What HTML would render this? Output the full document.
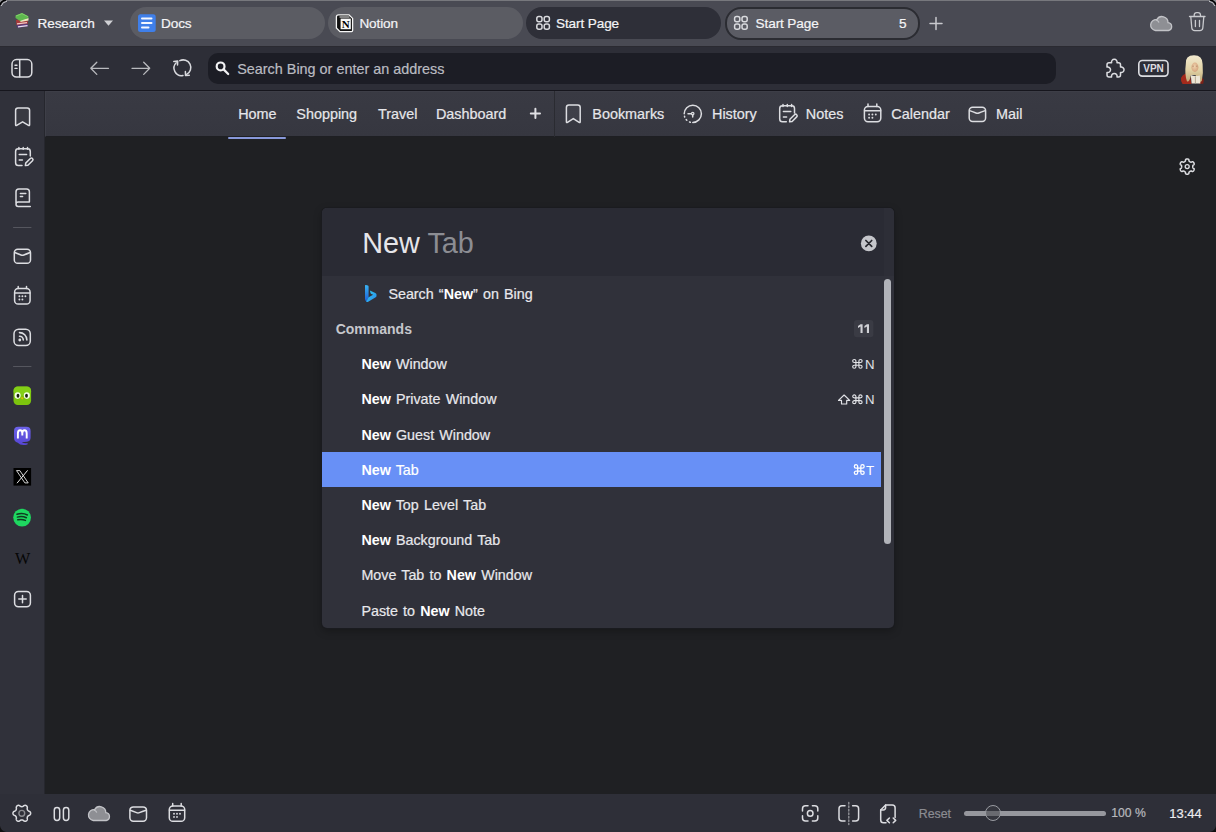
<!DOCTYPE html>
<html><head><meta charset="utf-8">
<style>
*{box-sizing:border-box;margin:0;padding:0}
html,body{width:1216px;height:832px;overflow:hidden;background:#1f2023;font-family:"Liberation Sans",sans-serif;}
.a{position:absolute}
.t{position:absolute;white-space:nowrap;line-height:1;-webkit-text-stroke:0.2px currentColor}
.t b{-webkit-text-stroke:0}
.nost{-webkit-text-stroke:0}
svg{position:absolute;overflow:visible}
#tabbar{left:0;top:0;width:1216px;height:46px;background:#494a53;border-top:1px solid #77787d}
#addr{left:0;top:46px;width:1216px;height:45px;background:#2d2e37;border-bottom:1px solid #16161d;border-top:1px solid #2a2a31}
#side{left:0;top:91px;width:45px;height:703px;background:#30313a;border-right:1px solid #26272e}
#bmbar{left:45px;top:91px;width:1171px;height:46px;background:linear-gradient(#393a43,#363740);border-bottom:1px solid #1e1f23;border-left:1px solid #3e3f48;border-top:1px solid #3d3e47}
#content{left:45px;top:137px;width:1171px;height:657px;background:#1f2023}
#status{left:0;top:794px;width:1216px;height:38px;background:#2e2f38}
.tab{position:absolute;top:7px;height:32px;border-radius:16px}
.tt{color:#f4f4f6;font-size:13.6px;letter-spacing:-0.12px}
.bm{color:#e6e6ea;font-size:14.4px}
.ic{fill:none;stroke:#dcdde1;stroke-width:1.5;stroke-linecap:round;stroke-linejoin:round}
#dlg{left:322px;top:208px;width:572px;height:420px;background:#30313a;border-radius:5px;overflow:hidden;box-shadow:0 0 0 1px #1a1b1f,0 3px 8px rgba(0,0,0,0.28)}
#dlghead{left:0;top:0;width:572px;height:68px;background:linear-gradient(90deg,#2a2b34 0,#2a2b34 562px,#2d2e37 562px)}
.it{color:#e8e8ec;font-size:14.3px;word-spacing:1.2px}
.it b{color:#fff}
</style></head><body>
<div id="tabbar" class="a"></div>
<div id="addr" class="a"></div>
<div id="side" class="a"></div>
<div id="bmbar" class="a"></div>
<div id="content" class="a"></div>
<div id="status" class="a"></div>

<!-- tabs -->
<div class="t tt" style="left:37.5px;top:16.9px">Research</div>
<div class="tab" style="left:130px;width:195px;background:#5b5c63"></div>
<div class="t tt" style="left:161px;top:16.9px">Docs</div>
<div class="tab" style="left:328px;width:195px;background:#5b5c63"></div>
<div class="t tt" style="left:359.4px;top:16.9px">Notion</div>
<div class="tab" style="left:526px;width:195px;background:#2e2f38"></div>
<div class="t tt" style="left:556px;top:16.9px">Start Page</div>
<div class="tab" style="left:724.5px;width:195px;top:6.5px;height:33px;background:#5b5c64;border:2px solid #2b2c32"></div>
<div class="t tt" style="left:755.6px;top:16.9px">Start Page</div>
<div class="t tt" style="left:899px;top:16.9px">5</div>


<!-- tab bar icons -->
<svg style="left:0;top:0" width="1216" height="46" viewBox="0 0 1216 46">
  <!-- books -->
  <path d="M16.5 24.5 L27.5 23 L28 26.5 L17.5 28 Z" fill="#5b3a78"/>
  <path d="M18 26.8 L27.5 25.6" stroke="#e8e0f0" stroke-width="1.3"/>
  <path d="M16 20 L27.5 18.5 L28 23.5 L16.5 25 Z" fill="#a83a3a"/>
  <path d="M17 23.8 L27 22.6" stroke="#f0c8c8" stroke-width="1.2"/>
  <path d="M20 19.5 L28.5 18 L28.5 20.5 L20.5 22 Z" fill="#ece8c0"/>
  <path d="M15.5 15.5 L22 13 L28.5 16.5 L28.5 18 L20 21 L15.5 18 Z" fill="#5fb84f"/>
  <path d="M16 16 L22 13.6 L28 16.6" stroke="#8ad870" stroke-width="0.8" fill="none"/>
  <!-- dropdown -->
  <path d="M104 20.6 L113 20.6 L108.5 25.8 Z" fill="#cfd0d4"/>
  <!-- docs -->
  <rect x="138" y="14.3" width="17.7" height="17.6" rx="2.5" fill="#3f7fe9"/>
  <path d="M142 18.6 H151.5 M142 23.1 H151.5 M142 27.6 H148.5" stroke="#f4f8ff" stroke-width="2" stroke-linecap="round"/>
  <!-- notion -->
  <path d="M338.5 14.8 H349 L352.6 18.4 V30.6 Q352.6 31.6 351.6 31.6 H340 L336.4 28 V16.8 Q336.4 14.8 338.5 14.8 Z" fill="#111" stroke="#f5f5f5" stroke-width="1.3"/>
  <rect x="340.6" y="18.6" width="10.2" height="10.6" fill="#fafafa"/>
  <path d="M339.5 17 H349.5" stroke="#f5f5f5" stroke-width="1"/>
  <text x="345.7" y="27.6" font-family="Liberation Serif" font-weight="bold" font-size="11" text-anchor="middle" fill="#000">N</text>
  <!-- start page icons -->
  <g fill="none" stroke="#d9dade" stroke-width="1.5">
    <rect x="536.8" y="16.6" width="5.2" height="5.2" rx="2"/>
    <rect x="544.2" y="16.6" width="5.2" height="5.2" rx="2"/>
    <rect x="536.8" y="24" width="5.2" height="5.2" rx="2"/>
    <rect x="544.2" y="24" width="5.2" height="5.2" rx="2"/>
    <rect x="734.6" y="16.6" width="5.2" height="5.2" rx="2"/>
    <rect x="742" y="16.6" width="5.2" height="5.2" rx="2"/>
    <rect x="734.6" y="24" width="5.2" height="5.2" rx="2"/>
    <rect x="742" y="24" width="5.2" height="5.2" rx="2"/>
  </g>
  <!-- plus -->
  <path d="M936 17.5 V29.5 M930 23.5 H942" stroke="#c9cace" stroke-width="1.5" stroke-linecap="round"/>
  <!-- cloud -->
  <path d="M1155.5 30.5 H1168.5 A4 4 0 0 0 1168 22.6 A6 6 0 0 0 1156.8 19.6 A5.4 5.4 0 0 0 1155.5 30.5 Z" fill="#8e8f94" stroke="#c2c3c7" stroke-width="1.3"/>
  <path d="M1156 20 A4.2 4.2 0 0 1 1159 22.5" fill="none" stroke="#c2c3c7" stroke-width="1.2"/>
  <!-- trash -->
  <g fill="none" stroke="#c9cace" stroke-width="1.3" stroke-linecap="round" stroke-linejoin="round">
    <path d="M1189.5 16.5 H1205"/>
    <path d="M1194.2 16.3 V15 A2.5 2.5 0 0 1 1196.7 12.6 H1198 A2.5 2.5 0 0 1 1200.5 15 V16.3"/>
    <path d="M1190.8 16.8 L1191.8 28 A3 3 0 0 0 1194.8 30.6 H1199.8 A3 3 0 0 0 1202.8 28 L1203.8 16.8"/>
    <path d="M1195.4 20.3 V26.5 M1199.5 20.3 V26.5"/>
  </g>
</svg>

<!-- address -->
<div class="a" style="left:207.5px;top:53px;width:848.5px;height:30.8px;border-radius:10px;background:#1c1d25"></div>
<div class="t" style="left:237.2px;top:61.6px;font-size:14.4px;color:#babbc1">Search Bing or enter an address</div>

<!-- bookmarks bar -->
<div class="t bm" style="left:238.2px;top:107.2px">Home</div>
<div class="t bm" style="left:296.3px;top:107.2px">Shopping</div>
<div class="t bm" style="left:378px;top:107.2px">Travel</div>
<div class="t bm" style="left:435.9px;top:107.2px">Dashboard</div>
<div class="a" style="left:228.3px;top:136.5px;width:58.2px;height:2px;border-radius:1px;background:#8898da"></div>
<div class="a" style="left:554px;top:91px;width:1px;height:46px;background:#2a2b31"></div>
<div class="t bm" style="left:592.3px;top:107.2px">Bookmarks</div>
<div class="t bm" style="left:712px;top:107.2px">History</div>
<div class="t bm" style="left:805.8px;top:107.2px">Notes</div>
<div class="t bm" style="left:891.3px;top:107.2px">Calendar</div>
<div class="t bm" style="left:996px;top:107.2px">Mail</div>

<!-- dialog -->
<div id="dlg" class="a">
  <div id="dlghead" class="a"></div>
</div>
<div class="t nost" style="left:362.3px;top:229.1px;font-size:28.8px;color:#e6e6ea">New <span style="color:#8c8d93">Tab</span></div>
<div class="t it" style="left:388.4px;top:286.9px">Search “<b>New</b>” on Bing</div>
<div class="t nost" style="left:335.7px;top:322px;font-size:14px;font-weight:bold;color:#c6c7cc">Commands</div>
<div class="a" style="left:322px;top:452px;width:559px;height:35px;background:#6890f6"></div>
<div class="t it" style="left:361.4px;top:357.2px"><b>New</b> Window</div>
<div class="t it" style="left:361.4px;top:392.4px"><b>New</b> Private Window</div>
<div class="t it" style="left:361.4px;top:427.6px"><b>New</b> Guest Window</div>
<div class="t it" style="left:361.4px;top:462.8px;color:#fff"><b>New</b> Tab</div>
<div class="t it" style="left:361.4px;top:498px"><b>New</b> Top Level Tab</div>
<div class="t it" style="left:361.4px;top:533.2px"><b>New</b> Background Tab</div>
<div class="t it" style="left:361.4px;top:568.4px">Move Tab to <b>New</b> Window</div>
<div class="t it" style="left:361.4px;top:603.6px">Paste to <b>New</b> Note</div>
<div class="a" style="left:884px;top:279px;width:7px;height:265px;border-radius:3.5px;background:#b1b3b9"></div>


<!-- address/bookmark/sidebar/status icons -->
<svg style="left:0;top:0" width="1216" height="832" viewBox="0 0 1216 832">
<defs>
  <linearGradient id="bingg" x1="0" y1="0" x2="1" y2="1"><stop offset="0" stop-color="#2aa4f4"/><stop offset="0.6" stop-color="#1b6fe0"/><stop offset="1" stop-color="#4fd6f2"/></linearGradient>
</defs>
<g class="ic">
  <!-- panel toggle -->
  <rect x="12" y="59.6" width="19.8" height="17.4" rx="4.5"/>
  <path d="M19.7 59.8 V76.8"/>
</g>
<path d="M15 65.2 H17 M15 68.4 H17" stroke="#e0e0e4" stroke-width="1.4" stroke-linecap="round"/>
<g fill="none" stroke="#b9babe" stroke-width="1.3" stroke-linecap="round" stroke-linejoin="round">
  <path d="M90.8 68.3 H108.5 M96.8 62.2 L90.8 68.3 L96.8 74.4"/>
  <path d="M132 68.3 H149.7 M143.7 62.2 L149.7 68.3 L143.7 74.4"/>
</g>
<g fill="none" stroke="#d8d9dd" stroke-width="1.5" stroke-linecap="round" stroke-linejoin="round">
  <path d="M176.2 62.8 A7.6 7.6 0 0 0 183 75.6"/>
  <path d="M179.8 60.7 A7.6 7.6 0 0 1 186.6 74.3"/>
  <path d="M173.8 61.4 L177.7 61 L177.5 65"/>
  <path d="M185.4 71.5 L185.5 75.5 L189.3 75.2"/>
</g>
<g fill="none" stroke="#f2f2f4" stroke-width="2.2" stroke-linecap="round">
  <circle cx="220.6" cy="66.4" r="3.9"/>
  <path d="M223.6 69.4 L228.2 74"/>
</g>
<!-- puzzle -->
<path class="ic" d="M1109 62.8 H1111.6 A2.8 2.8 0 1 1 1117 62.8 H1118.5 Q1120.5 62.8 1120.5 64.8 V67.1 A2.8 2.8 0 1 1 1120.5 72.5 V75 Q1120.5 77 1118.5 77 H1117 A2.8 2.8 0 1 0 1111.6 77 H1109 Q1107 77 1107 75 V72.5 A2.8 2.8 0 1 0 1107 67.1 V64.8 Q1107 62.8 1109 62.8 Z" stroke-width="1.5"/>
<!-- VPN -->
<rect x="1138.8" y="60.5" width="29.2" height="15.6" rx="3.5" fill="none" stroke="#dcdde1" stroke-width="1.6"/>
<text x="1153.5" y="71.8" font-family="Liberation Sans" font-weight="bold" font-size="10" text-anchor="middle" fill="#dcdde1">VPN</text>

<!-- avatar -->
<defs><linearGradient id="hairg" x1="0" y1="0" x2="0" y2="1"><stop offset="0" stop-color="#f2e9cf"/><stop offset="0.55" stop-color="#e2d3a6"/><stop offset="1" stop-color="#bda878"/></linearGradient>
<radialGradient id="faceg" cx="0.45" cy="0.4" r="0.6"><stop offset="0" stop-color="#f0d2ac"/><stop offset="1" stop-color="#d4a47e"/></radialGradient></defs>
<path d="M1181 78 Q1184 72.5 1189.5 73.5 L1191.5 84 H1182.5 Q1180.5 81.5 1181 78 Z" fill="#a32a1c"/>
<path d="M1199.5 77 Q1203 77.5 1203.8 80 L1203.2 83.8 H1199 Z" fill="#7e2016"/>
<path d="M1185.8 64 Q1185 55.5 1194 55.3 Q1202.6 55.5 1202.6 64 Q1203.5 73 1201.8 81 Q1198.5 83.5 1197 79 L1195.5 75 H1191 Q1189.5 82.5 1187 81.5 Q1184.4 74 1185.8 64 Z" fill="url(#hairg)"/>
<ellipse cx="1194.9" cy="67.3" rx="3.5" ry="4.7" fill="url(#faceg)"/>
<path d="M1192.3 66.2 H1193.9 M1195.9 66.2 H1197.5" stroke="#8a6448" stroke-width="0.7" opacity="0.7"/>
<path d="M1190.8 75 Q1195 76.8 1199.8 75.4 L1200.4 83.6 H1191.6 Z" fill="#ece5d5"/>
<path d="M1195.4 76.4 V83.6" stroke="#a89880" stroke-width="0.8"/>
<!-- bookmarks bar icons -->
<g class="ic">
  <path d="M566.4 107.5 Q566.4 105 568.9 105 H577.7 Q580.2 105 580.2 107.5 V121.8 Q580.2 123 579.1 122.3 L573.3 118.6 L567.5 122.3 Q566.4 123 566.4 121.8 Z" fill="rgba(255,255,255,0.04)"/>
  <path d="M684.2 113.8 A8.6 8.6 0 1 1 692.8 122.4"/>
</g>
<g fill="none" stroke="#dcdde1" stroke-width="1.5" stroke-linecap="round">
  <path d="M689.5 122 L690.3 122.2 M686.2 119.6 L686.8 120.2 M684.5 116.2 L684.7 117"/>
  <path d="M688 113.8 H691.2"/>
  <circle cx="692.7" cy="113.6" r="1.2" stroke-width="1.3"/>
  <path d="M692.7 115 V117"/>
</g>
<g class="ic">
  <path d="M794.5 113 V108.5 Q794.5 105.8 791.8 105.8 H782.5 Q779.7 105.8 779.7 108.5 V119 Q779.7 121.8 782.5 121.8 H786.3"/>
  <path d="M783 104.6 V106.4 M787.3 104.6 V106.4 M791.6 104.6 V106.4"/>
  <path d="M783.4 111.6 H790.8 M783.4 117.1 H786.6"/>
  <path d="M789.6 121.8 L789.9 119.3 L794.5 114.7 A1.5 1.5 0 0 1 796.7 116.9 L792.1 121.5 Z"/>
  <rect x="864.4" y="106.4" width="16.4" height="15.3" rx="3.6"/>
  <path d="M864.6 110.7 H880.6 M868 103.9 V106.4 M876.8 103.9 V106.4"/>
  <rect x="969.2" y="107.3" width="16.4" height="14.2" rx="3.4" fill="rgba(255,255,255,0.05)"/>
  <path d="M969.6 110.6 Q973.5 112 976 113 Q977.4 113.6 978.8 113 Q981.4 112 985.2 110.6"/>
</g>
<g fill="#dcdde1">
  <circle cx="869.1" cy="114.5" r="0.95"/><circle cx="872.4" cy="114.5" r="0.95"/><circle cx="875.8" cy="114.5" r="0.95"/>
  <circle cx="869.1" cy="117.8" r="0.95"/><circle cx="872.4" cy="117.8" r="0.95"/>
</g>
<path d="M535.4 108.8 V118 M530.8 113.4 H540" stroke="#e0e0e4" stroke-width="2" stroke-linecap="round"/>

<!-- sidebar icons -->
<g class="ic">
  <path d="M15.6 110.3 Q15.6 107.9 18 107.9 H27.2 Q29.6 107.9 29.6 110.3 V124.8 Q29.6 126 28.5 125.3 L22.6 121.8 L16.7 125.3 Q15.6 126 15.6 124.8 Z" fill="rgba(255,255,255,0.04)"/>
  <!-- notes -->
  <path d="M30.3 156 V151.4 Q30.3 148.7 27.6 148.7 H18.3 Q15.6 148.7 15.6 151.4 V162.8 Q15.6 165.6 18.3 165.6 H22"/>
  <path d="M18.9 147.5 V149.3 M23.2 147.5 V149.3 M27.5 147.5 V149.3"/>
  <path d="M19.2 154.4 H26.6 M19.2 159.9 H22.4"/>
  <path d="M25.4 165.6 L25.7 163.1 L30.3 158.5 A1.5 1.5 0 0 1 32.5 160.7 L27.9 165.3 Z"/>
  <!-- book -->
  <path d="M16 203.3 V191.8 Q16 189 18.8 189 H26.6 Q29.4 189 29.4 191.8 V202 H18.2 Q16 202 16 204.2 Q16 206.4 18.2 206.4 H30.3"/>
  <path d="M20.4 193.6 H25.8 M20.4 196.6 H22.6" />
  <path d="M13.5 227.5 H31" stroke="#55565e" stroke-width="1"/>
  <!-- mail -->
  <rect x="14.3" y="249.3" width="16.2" height="14" rx="3.4" fill="rgba(255,255,255,0.03)"/>
  <path d="M14.7 252.5 Q18.5 254 21 255 Q22.4 255.6 23.8 255 Q26.4 254 30.1 252.5"/>
  <!-- calendar -->
  <rect x="14.6" y="288.6" width="15.5" height="15.5" rx="3.6"/>
  <path d="M14.8 292.9 H29.9 M18.2 286.5 V288.6 M26.5 286.5 V288.6"/>
  <!-- feed -->
  <rect x="14" y="329.2" width="16.3" height="16.4" rx="4.6"/>
  <path d="M19.5 336.2 A3.8 3.8 0 0 1 23.3 340 M19.5 332.6 A7.4 7.4 0 0 1 26.9 340" stroke-width="1.6"/>
  <path d="M13.5 366.5 H31" stroke="#55565e" stroke-width="1"/>
  <!-- add -->
  <rect x="14.6" y="591.4" width="15.8" height="15.4" rx="3.8"/>
  <path d="M22.5 595.4 V602.8 M18.8 599.1 H26.2"/>
</g>
<g fill="#dcdde1">
  <circle cx="19.4" cy="296.3" r="0.95"/><circle cx="22.4" cy="296.3" r="0.95"/><circle cx="25.4" cy="296.3" r="0.95"/>
  <circle cx="19.4" cy="299.5" r="0.95"/><circle cx="22.4" cy="299.5" r="0.95"/>
  <circle cx="19.8" cy="340" r="1.4"/>
</g>
<!-- duolingo -->
<rect x="13.5" y="386.5" width="17.6" height="18.4" rx="4.2" fill="#7cc40e"/>
<rect x="13.5" y="386.5" width="17.6" height="9" rx="4.2" fill="#86d41a" opacity="0.7"/>
<ellipse cx="17.6" cy="395.6" rx="3" ry="3.3" fill="#f4ffe8"/>
<ellipse cx="26.8" cy="395.6" rx="3" ry="3.3" fill="#f4ffe8"/>
<ellipse cx="18" cy="395.8" rx="1.4" ry="2" fill="#1a2010"/>
<ellipse cx="26.5" cy="395.8" rx="1.4" ry="2" fill="#1a2010"/>
<path d="M20.6 397.6 H23.8 L22.2 399.6 Z" fill="#f2b800"/>
<!-- mastodon -->
<defs><linearGradient id="mastg" x1="0" y1="0" x2="0" y2="1"><stop offset="0" stop-color="#6c62e8"/><stop offset="1" stop-color="#5646d4"/></linearGradient></defs>
<path d="M18.2 426.8 H26.4 Q30.6 426.8 30.6 431 V437.8 Q30.6 441.4 27 441.8 L21.8 442.2 Q23.8 443.6 27.6 443 L27.5 444.5 Q20.6 446.2 17.8 442.8 Q14 442 14 437.6 V431 Q14 426.8 18.2 426.8 Z" fill="url(#mastg)"/>
<path d="M17.9 438.4 V433.4 Q17.9 430.3 20.1 430.3 Q22.3 430.3 22.3 433.4 V435.6 M22.3 435.6 V433.4 Q22.3 430.3 24.5 430.3 Q26.7 430.3 26.7 433.4 V438.4" fill="none" stroke="#ffffff" stroke-width="1.9" stroke-linejoin="round"/>
<!-- X -->
<rect x="13.5" y="468" width="17.6" height="17.6" fill="#000"/>
<path d="M16.5 470.6 H19.8 L28.2 482.9 H24.9 Z" fill="none" stroke="#e8e8e8" stroke-width="0.9"/>
<path d="M27.6 470.4 L17 483.2" stroke="#e8e8e8" stroke-width="1"/>
<!-- spotify -->
<circle cx="22.1" cy="517.6" r="8.9" fill="#1ed760"/>
<g fill="none" stroke="#0f3a20" stroke-width="1.5" stroke-linecap="round">
  <path d="M17 514.3 Q22.5 512.4 27.4 515"/>
  <path d="M17.4 517.1 Q22 515.7 26.4 517.8"/>
  <path d="M17.8 519.8 Q21.8 518.8 25.4 520.4"/>
</g>
<!-- wikipedia -->
<text x="22.75" y="564.2" font-family="Liberation Serif" font-size="16.2" text-anchor="middle" fill="#060606">W</text>

<!-- status bar icons -->
<g class="ic">
  <path d="M30.65 813.30 L30.63 813.61 L30.56 813.91 L30.45 814.21 L30.30 814.49 L30.10 814.76 L29.85 815.01 L29.54 815.23 L29.03 815.37 L28.71 815.55 L28.45 815.72 L28.22 815.89 L28.01 816.07 L27.84 816.24 L27.69 816.43 L27.56 816.62 L27.45 816.83 L27.37 817.06 L27.30 817.30 L27.25 817.56 L27.22 817.85 L27.20 818.16 L27.21 818.53 L27.34 819.04 L27.31 819.42 L27.22 819.76 L27.08 820.06 L26.91 820.34 L26.71 820.58 L26.48 820.79 L26.23 820.96 L25.95 821.10 L25.65 821.19 L25.34 821.25 L25.01 821.26 L24.68 821.22 L24.34 821.13 L24.00 820.97 L23.62 820.60 L23.31 820.41 L23.03 820.27 L22.76 820.15 L22.51 820.06 L22.27 820.00 L22.03 819.96 L21.80 819.95 L21.57 819.96 L21.33 820.00 L21.09 820.06 L20.84 820.15 L20.57 820.27 L20.29 820.41 L19.98 820.60 L19.60 820.97 L19.26 821.13 L18.92 821.22 L18.59 821.26 L18.26 821.25 L17.95 821.19 L17.65 821.10 L17.38 820.96 L17.12 820.79 L16.89 820.58 L16.69 820.34 L16.52 820.06 L16.38 819.76 L16.29 819.42 L16.26 819.04 L16.39 818.53 L16.40 818.16 L16.38 817.85 L16.35 817.56 L16.30 817.30 L16.23 817.06 L16.15 816.83 L16.04 816.62 L15.91 816.43 L15.76 816.24 L15.59 816.07 L15.38 815.89 L15.15 815.72 L14.89 815.55 L14.57 815.37 L14.06 815.23 L13.75 815.01 L13.50 814.76 L13.30 814.49 L13.15 814.21 L13.04 813.91 L12.97 813.61 L12.95 813.30 L12.97 812.99 L13.04 812.69 L13.15 812.39 L13.30 812.11 L13.50 811.84 L13.75 811.59 L14.06 811.37 L14.57 811.23 L14.89 811.05 L15.15 810.88 L15.38 810.71 L15.59 810.53 L15.76 810.36 L15.91 810.17 L16.04 809.97 L16.15 809.77 L16.23 809.54 L16.30 809.30 L16.35 809.04 L16.38 808.75 L16.40 808.44 L16.39 808.07 L16.26 807.56 L16.29 807.18 L16.38 806.84 L16.52 806.54 L16.69 806.26 L16.89 806.02 L17.12 805.81 L17.37 805.64 L17.65 805.50 L17.95 805.41 L18.26 805.35 L18.59 805.34 L18.92 805.38 L19.26 805.47 L19.60 805.63 L19.98 806.00 L20.29 806.19 L20.57 806.33 L20.84 806.45 L21.09 806.54 L21.33 806.60 L21.57 806.64 L21.80 806.65 L22.03 806.64 L22.27 806.60 L22.51 806.54 L22.76 806.45 L23.03 806.33 L23.31 806.19 L23.62 806.00 L24.00 805.63 L24.34 805.47 L24.68 805.38 L25.01 805.34 L25.34 805.35 L25.65 805.41 L25.95 805.50 L26.23 805.64 L26.48 805.81 L26.71 806.02 L26.91 806.26 L27.08 806.54 L27.22 806.84 L27.31 807.18 L27.34 807.56 L27.21 808.07 L27.20 808.44 L27.22 808.75 L27.25 809.04 L27.30 809.30 L27.37 809.54 L27.45 809.77 L27.56 809.97 L27.69 810.17 L27.84 810.36 L28.01 810.53 L28.22 810.71 L28.45 810.88 L28.71 811.05 L29.03 811.23 L29.54 811.37 L29.85 811.59 L30.10 811.84 L30.30 812.11 L30.45 812.39 L30.56 812.69 L30.63 812.99 Z"/>
  <rect x="54.3" y="807.5" width="5.4" height="13" rx="2.7"/>
  <rect x="63.4" y="807.5" width="5.4" height="13" rx="2.7"/>
  <rect x="129.9" y="806.9" width="16.6" height="14.3" rx="3.4" fill="rgba(255,255,255,0.03)"/>
  <path d="M130.3 810.2 Q134 811.6 136.6 812.6 Q138 813.2 139.4 812.6 Q142 811.6 146.1 810.2"/>
  <rect x="169.3" y="806" width="15.4" height="15.3" rx="3.6"/>
  <path d="M169.5 810.2 H184.5 M172.7 803.5 V806 M181.2 803.5 V806"/>
</g>
<circle cx="21.8" cy="813.3" r="2.9" fill="none" stroke="#8a8b90" stroke-width="1.4"/>
<g fill="#dcdde1">
  <circle cx="174" cy="813.7" r="0.95"/><circle cx="177" cy="813.7" r="0.95"/><circle cx="180" cy="813.7" r="0.95"/>
  <circle cx="174" cy="816.9" r="0.95"/><circle cx="177" cy="816.9" r="0.95"/>
</g>
<path d="M93.3 820.5 H106.3 A4 4 0 0 0 105.8 812.6 A6 6 0 0 0 94.6 809.6 A5.4 5.4 0 0 0 93.3 820.5 Z" fill="#8e8f94" stroke="#c2c3c7" stroke-width="1.3"/>
<path d="M93.8 810 A4.2 4.2 0 0 1 96.8 812.5" fill="none" stroke="#c2c3c7" stroke-width="1.2"/>
<g class="ic">
  <path d="M802.5 811 V808.8 Q802.5 805.8 805.5 805.8 H808 M812.4 805.8 H814.8 Q817.8 805.8 817.8 808.8 V811 M817.8 815.8 V818 Q817.8 821 814.8 821 H812.4 M808 821 H805.5 Q802.5 821 802.5 818 V815.8"/>
  <circle cx="810.2" cy="813.4" r="2.8"/>
  <path d="M845 805.8 H842 Q839 805.8 839 808.8 V818 Q839 821 842 821 H845 M852.6 805.8 H855.6 Q858.6 805.8 858.6 808.8 V818 Q858.6 821 855.6 821 H852.6"/>
  <path d="M848.8 802.5 V824.5" stroke="#9a9ba0" stroke-width="1.3" stroke-dasharray="1.6 1.9"/>
  <path d="M886 822.8 H883.5 Q880.7 822.8 880.7 820 V810 L885.6 805 H892.3 Q895.1 805 895.1 807.8 V817.5"/>
  <path d="M880.7 810 H883.3 Q885.6 810 885.6 807.6 V805"/>
  <path d="M889.4 818 L886.9 820.4 L889.4 822.8 M893.2 818 L895.7 820.4 L893.2 822.8"/>
</g>

<path class="ic" d="M1192.75 166.60 L1192.75 166.75 L1192.76 166.89 L1192.77 167.04 L1192.79 167.19 L1192.82 167.34 L1192.86 167.50 L1192.91 167.66 L1192.97 167.83 L1193.08 168.01 L1193.58 168.31 L1194.05 168.63 L1194.14 168.85 L1194.17 169.07 L1194.18 169.28 L1194.16 169.48 L1194.12 169.68 L1194.07 169.88 L1194.00 170.06 L1193.92 170.25 L1193.83 170.42 L1193.72 170.59 L1193.60 170.76 L1193.47 170.91 L1193.33 171.05 L1193.17 171.18 L1193.01 171.30 L1192.82 171.40 L1192.62 171.48 L1192.39 171.52 L1191.87 171.27 L1191.37 170.99 L1191.15 170.99 L1190.97 171.01 L1190.80 171.05 L1190.65 171.10 L1190.51 171.15 L1190.37 171.21 L1190.23 171.27 L1190.10 171.34 L1189.98 171.41 L1189.85 171.48 L1189.73 171.56 L1189.61 171.65 L1189.49 171.74 L1189.37 171.84 L1189.25 171.95 L1189.14 172.07 L1189.02 172.21 L1188.92 172.40 L1188.91 172.98 L1188.87 173.55 L1188.72 173.74 L1188.55 173.87 L1188.37 173.98 L1188.18 174.07 L1187.99 174.13 L1187.80 174.18 L1187.60 174.22 L1187.40 174.24 L1187.20 174.25 L1187.00 174.24 L1186.80 174.22 L1186.60 174.18 L1186.41 174.13 L1186.22 174.07 L1186.03 173.98 L1185.85 173.87 L1185.68 173.74 L1185.53 173.55 L1185.49 172.98 L1185.48 172.40 L1185.38 172.21 L1185.26 172.07 L1185.15 171.95 L1185.03 171.84 L1184.91 171.74 L1184.79 171.65 L1184.67 171.56 L1184.55 171.48 L1184.42 171.41 L1184.30 171.34 L1184.17 171.27 L1184.03 171.21 L1183.89 171.15 L1183.75 171.10 L1183.60 171.05 L1183.43 171.01 L1183.25 170.99 L1183.03 170.99 L1182.53 171.27 L1182.01 171.52 L1181.78 171.48 L1181.58 171.40 L1181.39 171.30 L1181.23 171.18 L1181.07 171.05 L1180.93 170.91 L1180.80 170.76 L1180.68 170.59 L1180.57 170.42 L1180.48 170.25 L1180.40 170.06 L1180.33 169.88 L1180.28 169.68 L1180.24 169.48 L1180.22 169.28 L1180.23 169.07 L1180.26 168.85 L1180.35 168.63 L1180.82 168.31 L1181.32 168.01 L1181.43 167.83 L1181.49 167.66 L1181.54 167.50 L1181.58 167.34 L1181.61 167.19 L1181.63 167.04 L1181.64 166.89 L1181.65 166.75 L1181.65 166.60 L1181.65 166.45 L1181.64 166.31 L1181.63 166.16 L1181.61 166.01 L1181.58 165.86 L1181.54 165.70 L1181.49 165.54 L1181.43 165.37 L1181.32 165.19 L1180.82 164.89 L1180.35 164.57 L1180.26 164.35 L1180.23 164.13 L1180.22 163.92 L1180.24 163.72 L1180.28 163.52 L1180.33 163.32 L1180.40 163.14 L1180.48 162.95 L1180.57 162.78 L1180.68 162.61 L1180.80 162.44 L1180.93 162.29 L1181.07 162.15 L1181.23 162.02 L1181.39 161.90 L1181.58 161.80 L1181.78 161.72 L1182.01 161.68 L1182.53 161.93 L1183.03 162.21 L1183.25 162.21 L1183.43 162.19 L1183.60 162.15 L1183.75 162.10 L1183.89 162.05 L1184.03 161.99 L1184.17 161.93 L1184.30 161.86 L1184.42 161.79 L1184.55 161.72 L1184.67 161.64 L1184.79 161.55 L1184.91 161.46 L1185.03 161.36 L1185.15 161.25 L1185.26 161.13 L1185.38 160.99 L1185.48 160.80 L1185.49 160.22 L1185.53 159.65 L1185.68 159.46 L1185.85 159.33 L1186.03 159.22 L1186.22 159.13 L1186.41 159.07 L1186.60 159.02 L1186.80 158.98 L1187.00 158.96 L1187.20 158.95 L1187.40 158.96 L1187.60 158.98 L1187.80 159.02 L1187.99 159.07 L1188.18 159.13 L1188.37 159.22 L1188.55 159.33 L1188.72 159.46 L1188.87 159.65 L1188.91 160.22 L1188.92 160.80 L1189.02 160.99 L1189.14 161.13 L1189.25 161.25 L1189.37 161.36 L1189.49 161.46 L1189.61 161.55 L1189.73 161.64 L1189.85 161.72 L1189.98 161.79 L1190.10 161.86 L1190.23 161.93 L1190.37 161.99 L1190.51 162.05 L1190.65 162.10 L1190.80 162.15 L1190.97 162.19 L1191.15 162.21 L1191.37 162.21 L1191.87 161.93 L1192.39 161.68 L1192.62 161.72 L1192.82 161.80 L1193.01 161.90 L1193.17 162.02 L1193.33 162.15 L1193.47 162.29 L1193.60 162.44 L1193.72 162.61 L1193.83 162.77 L1193.92 162.95 L1194.00 163.14 L1194.07 163.32 L1194.12 163.52 L1194.16 163.72 L1194.18 163.92 L1194.17 164.13 L1194.14 164.35 L1194.05 164.57 L1193.58 164.89 L1193.08 165.19 L1192.97 165.37 L1192.91 165.54 L1192.86 165.70 L1192.82 165.86 L1192.79 166.01 L1192.77 166.16 L1192.76 166.31 L1192.75 166.45 Z" stroke-width="1.4"/>
<circle cx="1187.2" cy="166.6" r="2" fill="none" stroke="#dcdde1" stroke-width="1.3"/>
<!-- shortcuts -->
<defs><path id="cmdk" d="M3.5 3.5 V1.9 A1.6 1.6 0 1 0 1.9 3.5 H8.1 A1.6 1.6 0 1 0 6.5 1.9 V8.1 A1.6 1.6 0 1 0 8.1 6.5 H1.9 A1.6 1.6 0 1 0 3.5 8.1 V3.5 Z"/></defs>
<g fill="none" stroke="#e2e3e7" stroke-width="1.15">
  <use href="#cmdk" transform="translate(852.4 359.2) scale(1.0 0.93)"/>
  <use href="#cmdk" transform="translate(852.4 394.6) scale(1.0 0.93)"/>
  <path d="M844.1 395 L849.7 400.4 H846.7 V404 H841.5 V400.4 H838.5 Z" stroke-linejoin="round"/>
</g>
<g fill="none" stroke="#ffffff" stroke-width="1.2">
  <use href="#cmdk" transform="translate(854 464.4) scale(1.05 1.04)"/>
</g>
<text x="865" y="369" font-family="Liberation Sans" font-size="13.2" fill="#e2e3e7">N</text>
<text x="865" y="404.3" font-family="Liberation Sans" font-size="13.2" fill="#e2e3e7">N</text>
<text x="866" y="475" font-family="Liberation Sans" font-size="13.4" fill="#ffffff">T</text>
<!-- dialog -->
<defs><linearGradient id="bstem" x1="0" y1="0" x2="0" y2="1"><stop offset="0" stop-color="#39b4f2"/><stop offset="1" stop-color="#1c5ed6"/></linearGradient>
<linearGradient id="bbowl" x1="0" y1="0" x2="1" y2="1"><stop offset="0" stop-color="#2fd0ee"/><stop offset="1" stop-color="#2a86ee"/></linearGradient></defs>
<path d="M365 285.6 Q365 284.7 366 285 L367.9 285.6 Q368.6 285.9 368.6 286.7 V297.3 L366.6 301.4 Q365 300.6 365 299 Z" fill="url(#bstem)"/>
<path d="M369.9 290.6 L375.3 292.9 Q376.5 293.4 376.5 294.6 V295.7 Q376.5 296.7 375.7 297.2 L367.8 301.9 Q366.6 302.5 366.2 301.5 L368.6 297.3 L373.2 294.8 L371.3 294 Q370.6 293.7 370.5 293 Z" fill="url(#bbowl)"/>
<circle cx="868.8" cy="243.4" r="7.9" fill="#c5c6cb"/>
<path d="M865.9 240.5 L871.7 246.3 M871.7 240.5 L865.9 246.3" stroke="#26272d" stroke-width="1.7" stroke-linecap="round"/>
<rect x="854" y="320" width="19.4" height="17.2" rx="3" fill="#3a3b44"/>
<path d="M860.5 324.2 H862.6 V333 H860.5 V326.6 L858 328.1 V326 Z M866.9 324.2 H869 V333 H866.9 V326.6 L864.4 328.1 V326 Z" fill="#d0d1d6"/>
</svg>

<!-- status -->
<div class="t" style="left:918.7px;top:807.5px;font-size:12.4px;color:#8b8c92">Reset</div>
<div class="a" style="left:963.5px;top:811px;width:142px;height:5px;border-radius:2.5px;background:#96979d"></div>
<div class="a" style="left:984.5px;top:805px;width:16px;height:16px;border-radius:50%;border:1px solid #9a9ca2;background:rgba(60,61,68,0.5)"></div>
<div class="t" style="left:1111.3px;top:807.2px;font-size:12.2px;color:#b8b9be">100 %</div>
<div class="t" style="left:1169.2px;top:806.6px;font-size:13px;color:#ececef">13:44</div>

<!-- window corners -->
<svg style="left:0;top:0" width="1216" height="832" viewBox="0 0 1216 832">
  <path d="M0 0 H7 Q1.5 0.5 0 6 Z" fill="#8f9095"/>
  <path d="M0 5 Q1 0.8 6 0" fill="none" stroke="#000" stroke-width="1.6"/>
  <path d="M1.3 6 Q2.2 2 7 1.2" fill="none" stroke="#c8c8cc" stroke-width="1"/>
  <path d="M1216 0 H1209 Q1214.5 0.5 1216 6 Z" fill="#8f9095"/>
  <path d="M1216 5 Q1215 0.8 1210 0" fill="none" stroke="#000" stroke-width="1.6"/>
  <path d="M1214.7 6 Q1213.8 2 1209 1.2" fill="none" stroke="#c8c8cc" stroke-width="1"/>
  <path d="M0 826 Q1 831 6 832 H0 Z" fill="#111"/>
  <path d="M1216 826 Q1215 831 1210 832 H1216 Z" fill="#111"/>
</svg>
</body></html>
